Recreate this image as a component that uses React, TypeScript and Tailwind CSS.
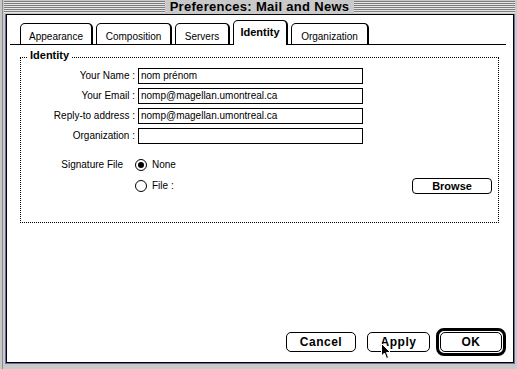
import React from "react";

interface TabProps {
  label: string;
  widthClass: string;
  active?: boolean;
}

function Tab({ label, widthClass, active }: TabProps) {
  if (active) {
    return (
      <div
        className={`-mb-px flex h-[25px] justify-center rounded-t-[5px] border border-r-2 border-b-0 border-black bg-white pt-[5px] text-[11px] font-bold leading-[12px] ${widthClass}`}
      >
        {label}
      </div>
    );
  }
  return (
    <div
      className={`flex h-[21px] justify-center rounded-t-[5px] border border-r-2 border-b-0 border-black bg-white pt-[7px] text-[10px] leading-[12px] ${widthClass}`}
    >
      {label}
    </div>
  );
}

function Radio({ checked }: { checked?: boolean }) {
  return (
    <span className="flex h-[12px] w-[12px] shrink-0 items-center justify-center rounded-full border border-black bg-white">
      {checked && <span className="h-[6px] w-[6px] rounded-full bg-black" />}
    </span>
  );
}

const fields = [
  { label: "Your Name :", value: "nom prénom" },
  { label: "Your Email :", value: "nomp@magellan.umontreal.ca" },
  { label: "Reply-to address :", value: "nomp@magellan.umontreal.ca" },
  { label: "Organization :", value: "" },
];

const stripes =
  "h-[12px] flex-1 bg-[repeating-linear-gradient(to_bottom,#7c7c7c_0px,#7c7c7c_1px,#e6e6e6_1px,#e6e6e6_2px)]";

export default function App() {
  return (
    <div className="relative h-[369px] w-[517px] overflow-hidden bg-[#c9c9c9] pl-[2px] font-['Liberation_Sans',Arial,sans-serif] text-black">
      <div className="flex h-full flex-col border-l border-[#8c8c8c]">
        {/* title bar */}
        <div className="flex h-[14px] items-start pl-[1px] pr-[2px] pt-[1px]">
          <div className={stripes} />
          <div className="-mt-[1px] px-[5px] text-[13px] font-bold leading-[14px] tracking-[0.3px]">
            Preferences: Mail and News
          </div>
          <div className={stripes} />
        </div>

        {/* window frame */}
        <div className="flex flex-1 pb-[5px] pl-[2px] pr-[2px]">
          <div className="flex flex-1 border-x border-b border-[#6c6ca4]">
            <div className="flex flex-1 flex-col border border-black bg-white">
              {/* tabs */}
              <div className="ml-[3px] mr-[7px] mt-[5px] flex items-end gap-[3px] border-b border-black pl-[10px]">
                <Tab label="Appearance" widthClass="w-[73px]" />
                <Tab label="Composition" widthClass="w-[76px]" />
                <Tab label="Servers" widthClass="w-[55px]" />
                <Tab label="Identity" widthClass="w-[55px]" active />
                <Tab label="Organization" widthClass="w-[78px]" />
              </div>

              {/* identity group */}
              <div className="relative ml-[13px] mt-[12px] h-[166px] w-[479px] border border-dotted border-black">
                <span className="absolute -top-[9px] left-[7px] bg-white px-[2px] text-[11px] font-bold leading-[12px]">
                  Identity
                </span>

                <div className="flex flex-col gap-[4px] pt-[10px]">
                  {fields.map((f) => (
                    <div key={f.label} className="flex h-[16px] items-center">
                      <span className="w-[114px] text-right text-[10px] leading-[14px]">{f.label}</span>
                      <div className="ml-[3px] flex h-[16px] w-[225px] items-center border border-black px-[2px] text-[10px] leading-[14px]">
                        {f.value}
                      </div>
                    </div>
                  ))}
                </div>

                <div className="mt-[15px] flex h-[12px] items-center">
                  <span className="w-[114px] pr-[12px] text-right text-[10px] leading-[12px]">Signature File</span>
                  <Radio checked />
                  <span className="ml-[5px] text-[10px] leading-[12px]">None</span>
                </div>

                <div className="mt-[7px] flex h-[16px] items-center pr-[6px]">
                  <span className="w-[114px]" />
                  <Radio />
                  <span className="ml-[5px] text-[10px] leading-[12px]">File :</span>
                  <button className="ml-auto h-[16px] w-[80px] rounded-[4px] border border-black bg-white text-[11px] font-bold leading-[14px]">
                    Browse
                  </button>
                </div>
              </div>

              {/* buttons */}
              <div className="mt-auto flex items-center justify-end pb-[6px] pr-[7px]">
                <button className="h-[20px] w-[70px] rounded-[5px] border border-black bg-white text-[12px] font-bold leading-[18px] tracking-[0.5px]">
                  Cancel
                </button>
                <button className="ml-[11px] h-[20px] w-[63px] rounded-[5px] border border-black bg-white text-[12px] font-bold leading-[18px] tracking-[0.5px]">
                  Apply
                </button>
                <div className="ml-[6px] flex h-[28px] w-[70px] rounded-[8px] border-[3px] border-black p-[1px]">
                  <button className="h-[20px] w-full rounded-[5px] border border-black bg-white text-[12px] font-bold leading-[18px] tracking-[0.5px]">
                    OK
                  </button>
                </div>
              </div>
            </div>
          </div>
        </div>
      </div>

      {/* mouse pointer */}
      <svg className="absolute left-[381px] top-[343px]" width="11" height="17" viewBox="0 0 11 17">
        <path
          d="M0.5 0.5 L0.5 13 L3.5 10 L5.5 15.5 L7.5 14.5 L5.5 9.5 L9.5 9.5 Z"
          fill="#000"
          stroke="#fff"
          strokeWidth="1"
          strokeLinejoin="miter"
        />
      </svg>
    </div>
  );
}
